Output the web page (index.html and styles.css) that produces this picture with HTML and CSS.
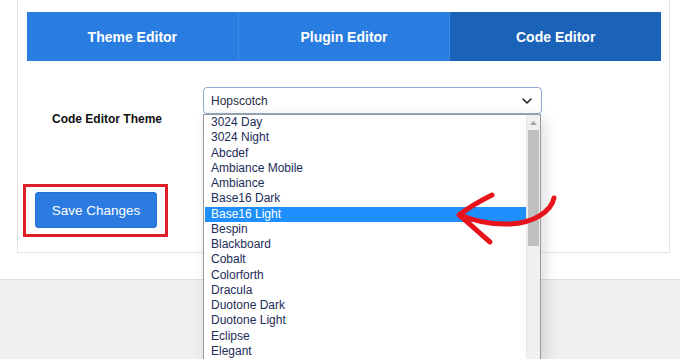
FILE: index.html
```html
<!DOCTYPE html>
<html lang="en">
<head>
<meta charset="utf-8">
<title>Code Editor Settings</title>
<link rel="stylesheet" href="styles.css">
</head>
<body>
<div class="page">
  <div class="card">
    <nav class="tabs">
      <div class="tab">Theme Editor</div>
      <div class="tab">Plugin Editor</div>
      <div class="tab tab-active">Code Editor</div>
    </nav>
    <div class="form-row">
      <label class="label">Code Editor Theme</label>
      <div class="select-wrap">
        <div class="select">
          <span>Hopscotch</span>
          <svg class="chevron" width="10" height="6" viewBox="0 0 10 6"><path d="M1 1 L5 5 L9 1" fill="none" stroke="#222" stroke-width="1.6" stroke-linecap="round" stroke-linejoin="round"/></svg>
        </div>
        <div class="dropdown">
          <ul class="options">
            <li>3024 Day</li>
            <li>3024 Night</li>
            <li>Abcdef</li>
            <li>Ambiance Mobile</li>
            <li>Ambiance</li>
            <li>Base16 Dark</li>
            <li class="selected">Base16 Light</li>
            <li>Bespin</li>
            <li>Blackboard</li>
            <li>Cobalt</li>
            <li>Colorforth</li>
            <li>Dracula</li>
            <li>Duotone Dark</li>
            <li>Duotone Light</li>
            <li>Eclipse</li>
            <li>Elegant</li>
          </ul>
          <div class="scrollbar">
            <div class="sb-up"><svg width="7" height="4" viewBox="0 0 7 4"><path d="M0 4 L3.5 0 L7 4 Z" fill="#a3a3a3"/></svg></div>
            <div class="sb-thumb"></div>
          </div>
        </div>
      </div>
    </div>
    <div class="actions">
      <div class="highlight-box">
        <button class="btn">Save Changes</button>
      </div>
    </div>
  </div>
</div>
<div class="footer"></div>
<svg class="arrow" width="680" height="359" viewBox="0 0 680 359">
  <path d="M554 198 C551 212 533 223 510 224 C488 225 472 220 460 215" fill="none" stroke="#e8141c" stroke-width="5" stroke-linecap="round" stroke-linejoin="round"/>
  <path d="M492 195 C480 201 468 208 459 215 C468 222 478 232 490 242" fill="none" stroke="#e8141c" stroke-width="5" stroke-linecap="round" stroke-linejoin="round"/>
</svg>
</body>
</html>
```
FILE: styles.css
```css
html, body {
  margin: 0;
  padding: 0;
  overflow: hidden;
  width: 680px;
  height: 359px;
}
body {
  position: relative;
  font-family: "Liberation Sans", Arial, sans-serif;
  background: #ffffff;
}
.page {
  height: 279px;
  background: #ffffff;
}
.card {
  box-sizing: border-box;
  margin-left: 17px;
  width: 653px;
  height: 253px;
  border: 1px solid #e3e3e3;
  border-top: none;
  padding: 12px 8px 0 9px;
}
.tabs {
  display: flex;
  height: 49px;
}
.tab {
  flex: 1;
  display: flex;
  align-items: center;
  justify-content: center;
  background: #2a7de0;
  color: #ffffff;
  font-weight: bold;
  font-size: 14px;
}
.tab + .tab {
  border-left: 1px solid #3f8be4;
}
.tab-active {
  background: #1b63b8;
  border-left-color: #2a72c8;
}
.form-row {
  display: flex;
  align-items: flex-start;
  margin-top: 26px;
  height: 40px;
}
.label {
  box-sizing: border-box;
  width: 176px;
  padding-left: 25px;
  margin-top: 25px;
  font-size: 12px;
  line-height: 15px;
  font-weight: bold;
  color: #111111;
}
.select-wrap {
  position: relative;
  width: 339px;
}
.select {
  box-sizing: border-box;
  height: 27px;
  border: 1px solid #8eaad0;
  border-radius: 4px;
  background: #ffffff;
  display: flex;
  align-items: center;
  justify-content: space-between;
  padding: 0 9px 0 7px;
  font-size: 12px;
  color: #1f2a44;
}
.chevron {
  display: block;
}
.dropdown {
  position: absolute;
  top: 27px;
  left: 0;
  width: 338px;
  height: 245px;
  overflow: hidden;
  box-sizing: border-box;
  background: #ffffff;
  border: 1px solid #9a9a9a;
  border-bottom: none;
  display: flex;
  z-index: 5;
  box-shadow: 4px 4px 14px rgba(0, 0, 0, 0.14);
}
.options {
  list-style: none;
  margin: 0;
  padding: 0 0 0 1px;
  flex: 1;
}
.options li {
  height: 15.25px;
  line-height: 15.25px;
  padding-left: 6px;
  font-size: 12px;
  color: #1c2b58;
  white-space: nowrap;
}
.options li.selected {
  background: #1e8ffc;
  color: #ffffff;
}
.scrollbar {
  width: 13px;
  background: #f0f0f0;
  border-left: 1px solid #e6e6e6;
  display: flex;
  flex-direction: column;
}
.sb-up {
  height: 15px;
  display: flex;
  align-items: center;
  justify-content: center;
}
.sb-thumb {
  height: 116px;
  margin: 0 1px;
  background: #c0c0c0;
}
.actions {
  margin-top: 57px;
  margin-left: -4px;
}
.highlight-box {
  display: inline-flex;
  border: 3px solid #df1f2a;
  padding: 5px 8px 6px 9px;
}
.btn {
  width: 122px;
  height: 36px;
  border: 1px solid #2572d0;
  border-radius: 3px;
  background: #2b7be0;
  color: #ffffff;
  font-family: "Liberation Sans", Arial, sans-serif;
  font-size: 13.5px;
  padding: 0;
}
.footer {
  height: 80px;
  background: #f0f0f0;
  border-top: 1px solid #dedede;
}
.arrow {
  position: absolute;
  top: 0;
  left: 0;
  z-index: 10;
  pointer-events: none;
}
```
